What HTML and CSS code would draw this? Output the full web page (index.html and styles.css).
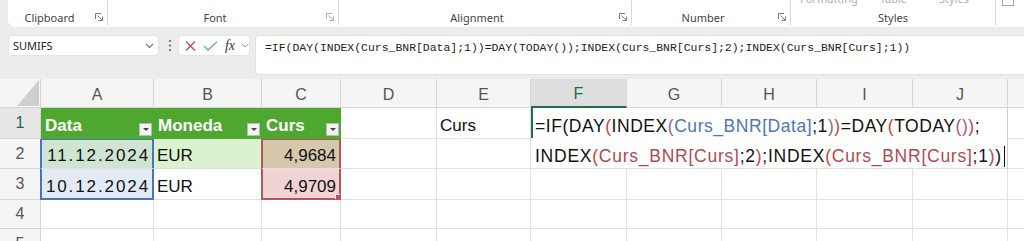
FILE: index.html
```html
<!DOCTYPE html>
<html>
<head>
<meta charset="utf-8">
<link rel="stylesheet" href="styles.css">
</head>
<body>
<div class="app">
  <div class="ribbon">
    <div class="ribbon-panel">
      <div class="group g-clip"><div class="glabel">Clipboard</div><span class="launcher"><svg width="8" height="8" viewBox="0 0 8 8"><path d="M0.5 6V0.5H6" fill="none" stroke="#7a7a7a"/><path d="M2.5 2.5L7 7M7.5 3.5V7.5H3.5" fill="none" stroke="#7a7a7a"/></svg></span></div>
      <div class="group g-font"><div class="glabel">Font</div><span class="launcher faint"><svg width="8" height="8" viewBox="0 0 8 8"><path d="M0.5 6V0.5H6" fill="none" stroke="#7a7a7a"/><path d="M2.5 2.5L7 7M7.5 3.5V7.5H3.5" fill="none" stroke="#7a7a7a"/></svg></span></div>
      <div class="group g-align"><div class="glabel">Alignment</div><span class="launcher"><svg width="8" height="8" viewBox="0 0 8 8"><path d="M0.5 6V0.5H6" fill="none" stroke="#7a7a7a"/><path d="M2.5 2.5L7 7M7.5 3.5V7.5H3.5" fill="none" stroke="#7a7a7a"/></svg></span></div>
      <div class="group g-num"><div class="glabel">Number</div><span class="launcher"><svg width="8" height="8" viewBox="0 0 8 8"><path d="M0.5 6V0.5H6" fill="none" stroke="#7a7a7a"/><path d="M2.5 2.5L7 7M7.5 3.5V7.5H3.5" fill="none" stroke="#7a7a7a"/></svg></span></div>
      <div class="group g-styles">
        <div class="ghost"><span class="gh1">Formatting</span><span class="gh2">Table</span><span class="gh3">Styles</span></div>
        <div class="glabel">Styles</div>
      </div>
      <div class="group g-rest"><span class="cut-icon"></span></div>
    </div>
  </div>

  <div class="fbar">
    <div class="namebox"><span>SUMIFS</span><svg width="9" height="6" viewBox="0 0 9 6"><path d="M1 1L4.5 4.5L8 1" fill="none" stroke="#777" stroke-width="1.2"/></svg></div>
    <div class="dots"><svg width="4" height="13" viewBox="0 0 4 13"><circle cx="2" cy="2" r="1.1" fill="#666"/><circle cx="2" cy="6.5" r="1.1" fill="#666"/><circle cx="2" cy="11" r="1.1" fill="#666"/></svg></div>
    <div class="fnbox">
      <span class="fi"><svg width="11" height="10" viewBox="0 0 11 10"><path d="M1 0.5L10 9.5M10 0.5L1 9.5" stroke="#d9434f" stroke-width="1.3" fill="none"/></svg></span>
      <span class="fi"><svg width="15" height="10" viewBox="0 0 15 10"><path d="M1 5L5 9L14 0.8" stroke="#6ab46a" stroke-width="1.3" fill="none"/></svg></span>
      <span class="fi fx">fx</span>
      <span class="fi fchev"><svg width="8" height="5" viewBox="0 0 8 5"><path d="M0.5 0.8L4 4L7.5 0.8" fill="none" stroke="#999" stroke-width="1"/></svg></span>
    </div>
    <div class="formula">=IF(DAY(INDEX(Curs_BNR[Data];1))=DAY(TODAY());INDEX(Curs_BNR[Curs];2);INDEX(Curs_BNR[Curs];1))</div>
  </div>

  <div class="sheet">
    <div class="c corner"><span class="tri"></span></div>
    <div class="c ch">A</div>
    <div class="c ch">B</div>
    <div class="c ch">C</div>
    <div class="c ch">D</div>
    <div class="c ch">E</div>
    <div class="c ch active">F</div>
    <div class="c ch">G</div>
    <div class="c ch">H</div>
    <div class="c ch">I</div>
    <div class="c ch">J</div>
    <div class="c ch"></div>

    <div class="c rh active">1</div>
    <div class="c th"><span>Data</span><span class="dd"></span></div>
    <div class="c th"><span>Moneda</span><span class="dd"></span></div>
    <div class="c th"><span>Curs</span><span class="dd"></span></div>
    <div class="c"></div>
    <div class="c">Curs</div>
    <div class="editor">
      <div class="eline first">=IF(DAY<span class="p2">(</span>INDEX<span class="p3">(</span><span class="rb">Curs_BNR[Data]</span>;1<span class="p3">)</span><span class="p2">)</span>=DAY<span class="p2">(</span>TODAY<span class="p3">()</span><span class="p2">)</span>;</div>
      <div class="eline second">INDEX<span class="p2">(</span><span class="rr">Curs_BNR[Curs]</span>;2<span class="p2">)</span>;INDEX<span class="p2">(</span><span class="rr">Curs_BNR[Curs]</span>;1<span class="p2">)</span>)<span class="caret"></span></div>
    </div>
    <div class="c"></div>

    <div class="c rh">2</div>
    <div class="c num date a2">11.12.2024</div>
    <div class="c band">EUR</div>
    <div class="c num c2">4,9684</div>
    <div class="c"></div>
    <div class="c"></div>
    <div class="c"></div>

    <div class="c rh">3</div>
    <div class="c num date a3">10.12.2024</div>
    <div class="c">EUR</div>
    <div class="c num c3">4,9709<span class="handle"></span></div>
    <div class="c"></div>
    <div class="c"></div>
    <div class="c"></div>
    <div class="c"></div>
    <div class="c"></div>
    <div class="c"></div>
    <div class="c"></div>
    <div class="c"></div>

    <div class="c rh">4</div>
    <div class="c"></div><div class="c"></div><div class="c"></div><div class="c"></div><div class="c"></div><div class="c"></div><div class="c"></div><div class="c"></div><div class="c"></div><div class="c"></div><div class="c"></div>

    <div class="c rh">5</div>
    <div class="c"></div><div class="c"></div><div class="c"></div><div class="c"></div><div class="c"></div><div class="c"></div><div class="c"></div><div class="c"></div><div class="c"></div><div class="c"></div><div class="c"></div>
  </div>
</div>
</body>
</html>
```

FILE: styles.css
```css
* { box-sizing: border-box; }
html, body { margin: 0; padding: 0; }
body {
  background: #ececec;
  font-family: "Liberation Sans", Arial, sans-serif;
  width: 1024px;
  height: 241px;
  overflow: hidden;
}
.app { width: 1024px; height: 241px; overflow: hidden; }

/* Ribbon */
.ribbon { height: 27px; padding-left: 8px; }
.ribbon-panel {
  height: 27px;
  background: #fff;
  border-radius: 0 0 0 7px;
  display: flex;
  overflow: hidden;
  font-family: "Noto Sans", sans-serif;
  font-size: 11px;
  color: #444;
}
.group {
  flex: none;
  height: 25px;
  border-right: 1px solid #dadada;
  display: flex;
  align-items: flex-end;
}
.g-clip { width: 100px; }
.g-font { width: 231px; }
.g-align { width: 293px; }
.g-num { width: 159px; }
.g-styles {
  width: 205px;
  flex-direction: column;
  align-items: stretch;
  justify-content: space-between;
}
.g-rest { flex: 1; border-right: none; align-items: flex-start; }
.glabel {
  flex: 1;
  text-align: center;
  line-height: 14px;
  padding-bottom: 0;
  white-space: nowrap;
}
.g-styles .glabel { flex: none; }
.launcher {
  width: 16px;
  height: 14px;
  margin-bottom: 1px;
  display: flex;
  align-items: center;
  justify-content: center;
}
.launcher.faint { opacity: 0.6; }
.ghost {
  height: 14px;
  margin-top: -8px;
  line-height: 14px;
  color: #b0b0b0;
  white-space: nowrap;
  display: flex;
}
.gh1 { margin-left: 9px; }
.gh2 { margin-left: 22px; }
.gh3 { margin-left: 32px; }
.cut-icon {
  width: 12px;
  height: 6px;
  margin-left: 6px;
  border: 1px solid #a8a8a8;
  border-top: none;
}

/* Formula bar */
.fbar {
  display: flex;
  align-items: flex-start;
  margin-top: 8px;
  height: 40px;
}
.namebox {
  margin-left: 8px;
  width: 151px;
  height: 21px;
  background: #fff;
  border: 1px solid #e3e3e3;
  border-radius: 4px;
  display: flex;
  align-items: center;
  justify-content: space-between;
  padding: 0 4px 0 4px;
  font-family: "Noto Sans", sans-serif;
  font-size: 11px;
  color: #222;
}
.dots {
  width: 10px;
  height: 21px;
  margin-left: 6px;
  display: flex;
  align-items: center;
  justify-content: center;
}
.fnbox {
  margin-left: 3px;
  width: 72px;
  height: 21px;
  background: #fff;
  border: 1px solid #e6e6e6;
  border-radius: 4px;
  display: flex;
  align-items: center;
  padding-left: 1px;
}
.fi {
  width: 20px;
  display: flex;
  align-items: center;
  justify-content: center;
}
.fx {
  font-family: "Liberation Serif", serif;
  font-style: italic;
  font-size: 14px;
  color: #333;
  line-height: 16px;
}
.fchev { width: 9px; }
.formula {
  margin-left: 5px;
  flex: 1;
  height: 40px;
  background: #fff;
  border: 1px solid #e2e2e2;
  border-right: none;
  border-radius: 4px 0 0 4px;
  padding: 4px 0 0 9px;
  font-family: "Liberation Mono", monospace;
  font-size: 11.45px;
  line-height: 16px;
  color: #222;
  white-space: nowrap;
  overflow: hidden;
}

/* Sheet grid */
.sheet {
  margin-top: 4px;
  display: grid;
  grid-template-columns: 41px 113px 108px 79px 96px 94px 96px 95px 95px 96px 95px 100px;
  grid-template-rows: 29px 31px 30px 31px 29px 30px;
  width: 1108px;
  background: #fff;
}
.c {
  position: relative;
  border-right: 1px solid #e1e1e1;
  border-bottom: 1px solid #e1e1e1;
  background: #fff;
  font-size: 17px;
  line-height: 20px;
  color: #111;
  padding: 0 4px 2px 3px;
  display: flex;
  align-items: flex-end;
  white-space: nowrap;
  overflow: hidden;
}
.num { justify-content: flex-end; }
.date { letter-spacing: 1.9px; padding-right: 3px; }
.ch {
  background: #f5f5f5;
  border-color: #d6d6d6;
  justify-content: center;
  align-items: center;
  color: #555;
  font-size: 16px;
  padding: 3px 0 0;
}
.ch.active {
  background: #dedede;
  color: #1e6b41;
  border-bottom: 2px solid #1e7145;
}
.rh {
  background: #f5f5f5;
  border-color: #d6d6d6;
  justify-content: center;
  align-items: center;
  color: #555;
  font-size: 16px;
  padding: 0;
}
.rh.active { background: #e6e6e6; color: #1e6b41; }
.corner {
  background: #f5f5f5;
  border-color: #d6d6d6;
  justify-content: flex-end;
  padding: 0;
}
.tri {
  width: 22px;
  height: 26px;
  background: #cfcfcf;
  clip-path: polygon(100% 0, 100% 100%, 0 100%);
  margin-right: 1px;
  margin-bottom: 1px;
}

/* Table header */
.th {
  background: #4ea72e;
  border-color: #4ea72e;
  color: #fff;
  font-weight: bold;
  justify-content: space-between;
  padding: 0 1px 1px 4px;
}
.th span:first-child { padding-bottom: 1px; }
.dd {
  width: 13px;
  height: 13px;
  background: #f3f3f3;
  border: 1px solid #b9b9b9;
  display: flex;
  align-items: center;
  justify-content: center;
  margin-bottom: 1px;
}
.dd::before {
  content: "";
  border-left: 3px solid transparent;
  border-right: 3px solid transparent;
  border-top: 3px solid #444;
}

.band { background: #daf2d0; border-bottom-color: #d2e6c9; }

/* Reference highlights */
.a2 {
  background: #cfe5d2;
  border-right-color: #4a74b8;
  box-shadow: -1px 0 0 #4a74b8, inset 1px 0 0 #4a74b8, inset 0 1px 0 #4a74b8, inset -1px 0 0 #4a74b8;
}
.a3 {
  background: #e2eaf6;
  border-right-color: #4a74b8;
  border-bottom-color: #4a74b8;
  box-shadow: -1px 0 0 #4a74b8, inset 1px 0 0 #4a74b8, inset -1px 0 0 #4a74b8, inset 0 -1px 0 #4a74b8;
}
.c2 {
  background: #d6c8ac;
  border-right-color: #b8525c;
  box-shadow: -1px 0 0 #b8525c, inset 1px 0 0 #b8525c, inset 0 1px 0 #b8525c, inset -1px 0 0 #b8525c;
}
.c3 {
  background: #f0d4d4;
  border-right-color: #b8525c;
  border-bottom-color: #b8525c;
  box-shadow: -1px 0 0 #b8525c, inset 1px 0 0 #b8525c, inset -1px 0 0 #b8525c, inset 0 -1px 0 #b8525c;
}
.handle {
  position: absolute;
  right: 0;
  bottom: 0;
  width: 5px;
  height: 5px;
  background: #b8525c;
  border-top: 1px solid #fff;
  border-left: 1px solid #fff;
}

/* In-cell editor spanning F1:J2 */
.editor {
  grid-column: 7 / span 5;
  grid-row: 2 / span 2;
  background: #fff;
  border-right: 1px solid #d0d0d0;
  border-bottom: 1px solid #e1e1e1;
  display: flex;
  flex-direction: column;
  font-size: 17.5px;
  letter-spacing: 0.55px;
  color: #111;
  white-space: nowrap;
}
.eline {
  height: 30px;
  display: flex;
  align-items: flex-end;
  padding: 0 0 2px 4px;
  line-height: 20px;
}
.eline.first {
  height: 31px;
  border-left: 2px solid #1e7145;
  padding-left: 2px;
}
.eline.second { letter-spacing: 0.75px; }
.p2 { color: #c8463c; }
.p3 { color: #a65a9c; }
.rb { color: #4a78b8; }
.rr { color: #b04a52; }
.caret {
  display: inline-block;
  width: 1px;
  height: 21px;
  background: #111;
  margin-left: 2px;
  margin-bottom: -1px;
  align-self: flex-end;
}
```
